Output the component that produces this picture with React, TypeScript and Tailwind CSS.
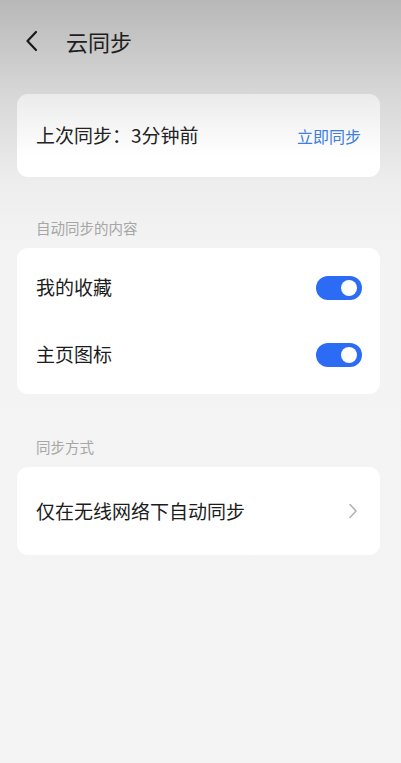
import { useState } from "react";

const FONT = { fontFamily: '"Noto Sans CJK SC", "Noto Sans", sans-serif' };

function Toggle({ on, onChange }: { on: boolean; onChange: () => void }) {
  return (
    <button
      onClick={onChange}
      className={`relative w-[46px] h-[24px] rounded-full transition-colors ${on ? "bg-[#2c6cf5]" : "bg-[#d4d4d4]"}`}
    >
      <span
        className={`absolute top-[4px] w-[16px] h-[16px] rounded-full bg-white transition-all ${on ? "left-[25px]" : "left-[5px]"}`}
      />
    </button>
  );
}

function SectionLabel({ children }: { children: string }) {
  return <p className="px-[36px] h-[20px] leading-[20px] text-[14.5px] text-[#a6a6a6]">{children}</p>;
}

export default function App() {
  const [fav, setFav] = useState(true);
  const [home, setHome] = useState(true);

  return (
    <div
      style={FONT}
      className="min-h-[763px] w-full bg-[linear-gradient(to_bottom,#b8b8b8_0px,#d6d6d6_90px,#ededed_180px,#f3f3f3_240px,#f4f4f4_100%)] text-[#1c1c1c]"
    >
      {/* header */}
      <div className="h-[82px] flex items-center px-[24px]">
        <svg width="16" height="22" viewBox="0 0 16 22" fill="none" className="mr-[26px]">
          <path d="M12 2 L3.5 11 L12 20" stroke="#1a1a1a" strokeWidth="2.2" strokeLinecap="round" strokeLinejoin="round" />
        </svg>
        <h1 className="text-[22px] leading-none text-[#1e1e1e]">云同步</h1>
      </div>

      {/* last sync */}
      <div className="ml-[17px] mr-[21px] mt-[12px] h-[83px] rounded-[11px] bg-[linear-gradient(to_bottom,#ebebeb_0%,#f7f7f7_45%,#ffffff_75%)] flex items-center justify-between pl-[19px] pr-[19px]">
        <span className="text-[19px] text-[#222]">上次同步：3分钟前</span>
        <button className="text-[16px] text-[#3d7de4]">立即同步</button>
      </div>

      {/* auto sync content */}
      <div className="mt-[41px] mb-[10px]">
        <SectionLabel>自动同步的内容</SectionLabel>
      </div>
      <div className="ml-[17px] mr-[21px] rounded-[11px] bg-white py-[6px]">
        <div className="h-[67px] flex items-center justify-between pl-[19px] pr-[18px]">
          <span className="text-[19px] text-[#1c1c1c]">我的收藏</span>
          <Toggle on={fav} onChange={() => setFav(v => !v)} />
        </div>
        <div className="h-[67px] flex items-center justify-between pl-[19px] pr-[18px]">
          <span className="text-[19px] text-[#1c1c1c]">主页图标</span>
          <Toggle on={home} onChange={() => setHome(v => !v)} />
        </div>
      </div>

      {/* sync method */}
      <div className="mt-[43px] mb-[10px]">
        <SectionLabel>同步方式</SectionLabel>
      </div>
      <div className="ml-[17px] mr-[21px] h-[88px] rounded-[11px] bg-white flex items-center justify-between pl-[19px] pr-[22px]">
        <span className="text-[19px] text-[#1c1c1c]">仅在无线网络下自动同步</span>
        <svg width="10" height="16" viewBox="0 0 10 16" fill="none">
          <path d="M2 1.5 L8 8 L2 14.5" stroke="#b3b3b3" strokeWidth="1.6" strokeLinecap="round" strokeLinejoin="round" />
        </svg>
      </div>
    </div>
  );
}
